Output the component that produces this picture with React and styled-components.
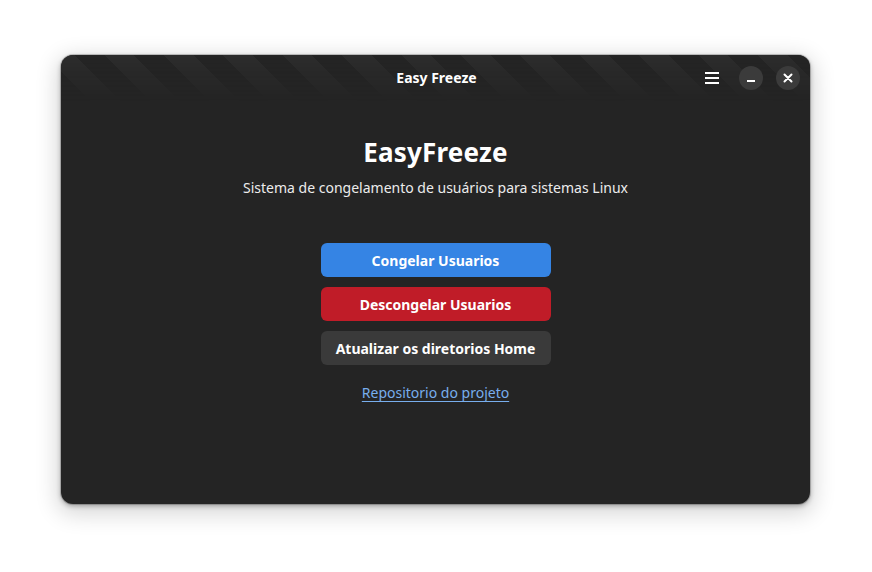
import React from "react";
import styled, { createGlobalStyle } from "styled-components";

const Global = createGlobalStyle`
  html, body { margin: 0; padding: 0; background: #ffffff; }
  body { font-family: "Noto Sans", "Open Sans", sans-serif; }
`;

const Stage = styled.div`
  width: 872px;
  height: 572px;
  box-sizing: border-box;
  padding: 55px 62px 68px 61px;
`;

const Window = styled.div`
  width: 749px;
  height: 449px;
  background: #242424;
  border-radius: 12px;
  box-shadow: 0 2px 5px rgba(0,0,0,0.3), 0 6px 22px 4px rgba(0,0,0,0.16), 0 0 0 1px rgba(0,0,0,0.18);
  overflow: hidden;
  display: flex;
  flex-direction: column;
  color: #ffffff;
`;

const HeaderBar = styled.div`
  position: relative;
  height: 46px;
  flex: none;
  display: grid;
  grid-template-columns: 1fr auto 1fr;
  align-items: center;
  padding: 0 10px 0 12px;
  &::before {
    content: "";
    position: absolute;
    inset: 0;
    background: repeating-linear-gradient(
      45deg,
      #242424 0px,
      #242424 21px,
      #2c2c2c 21px,
      #2c2c2c 42px
    );
    -webkit-mask-image: linear-gradient(to bottom, rgba(0,0,0,1), rgba(0,0,0,0));
    mask-image: linear-gradient(to bottom, rgba(0,0,0,1), rgba(0,0,0,0));
    pointer-events: none;
  }
`;

const HeaderTitle = styled.div`
  position: relative;
  grid-column: 2;
  font-size: 14px;
  font-weight: 700;
  color: #ffffff;
  margin-top: -2px;
`;

const Controls = styled.div`
  position: relative;
  grid-column: 3;
  justify-self: end;
  display: flex;
  align-items: center;
  gap: 13px;
`;

const MenuButton = styled.div`
  width: 24px;
  height: 24px;
  display: flex;
  align-items: center;
  justify-content: center;
  margin-right: 2px;
`;

const CircleButton = styled.div`
  width: 24px;
  height: 24px;
  border-radius: 50%;
  background: #3b3b3b;
  display: flex;
  align-items: center;
  justify-content: center;
`;

const Content = styled.div`
  flex: 1;
  display: flex;
  flex-direction: column;
  align-items: center;
  padding-top: 34px;
`;

const AppTitle = styled.h1`
  margin: 0;
  font-size: 26px;
  font-weight: 700;
  line-height: 34px;
  letter-spacing: 0.2px;
`;

const Subtitle = styled.p`
  margin: 9px 0 0;
  font-size: 14px;
  line-height: 20px;
  color: #ececec;
`;

const ButtonStack = styled.div`
  margin-top: 45px;
  display: flex;
  flex-direction: column;
  gap: 10px;
  width: 230px;
`;

const ActionButton = styled.button`
  height: 34px;
  border: none;
  border-radius: 6px;
  background: ${(p) => p.$bg};
  color: #ffffff;
  font-family: inherit;
  font-size: 14px;
  font-weight: 700;
  padding: 0;
  cursor: pointer;
`;

const Link = styled.a`
  margin-top: 18px;
  font-size: 14px;
  line-height: 20px;
  color: #78aeed;
  text-decoration: underline;
  text-underline-offset: 3px;
`;

export default function App() {
  return (
    <>
      <Global />
      <Stage>
        <Window>
          <HeaderBar>
            <HeaderTitle>Easy Freeze</HeaderTitle>
            <Controls>
              <MenuButton>
                <svg width="14" height="12" viewBox="0 0 14 12">
                  <rect x="0" y="0" width="14" height="2" fill="#fff" />
                  <rect x="0" y="5" width="14" height="2" fill="#fff" />
                  <rect x="0" y="10" width="14" height="2" fill="#fff" />
                </svg>
              </MenuButton>
              <CircleButton>
                <svg width="10" height="10" viewBox="0 0 10 10">
                  <rect x="1" y="7" width="8" height="2" fill="#fff" />
                </svg>
              </CircleButton>
              <CircleButton>
                <svg width="10" height="10" viewBox="0 0 10 10">
                  <path d="M1.5 1.5 L8.5 8.5 M8.5 1.5 L1.5 8.5" stroke="#fff" strokeWidth="2" strokeLinecap="round" />
                </svg>
              </CircleButton>
            </Controls>
          </HeaderBar>
          <Content>
            <AppTitle>EasyFreeze</AppTitle>
            <Subtitle>Sistema de congelamento de usuários para sistemas Linux</Subtitle>
            <ButtonStack>
              <ActionButton $bg="#3584e4">Congelar Usuarios</ActionButton>
              <ActionButton $bg="#c01c28">Descongelar Usuarios</ActionButton>
              <ActionButton $bg="#3a3a3a">Atualizar os diretorios Home</ActionButton>
            </ButtonStack>
            <Link href="#">Repositorio do projeto</Link>
          </Content>
        </Window>
      </Stage>
    </>
  );
}
